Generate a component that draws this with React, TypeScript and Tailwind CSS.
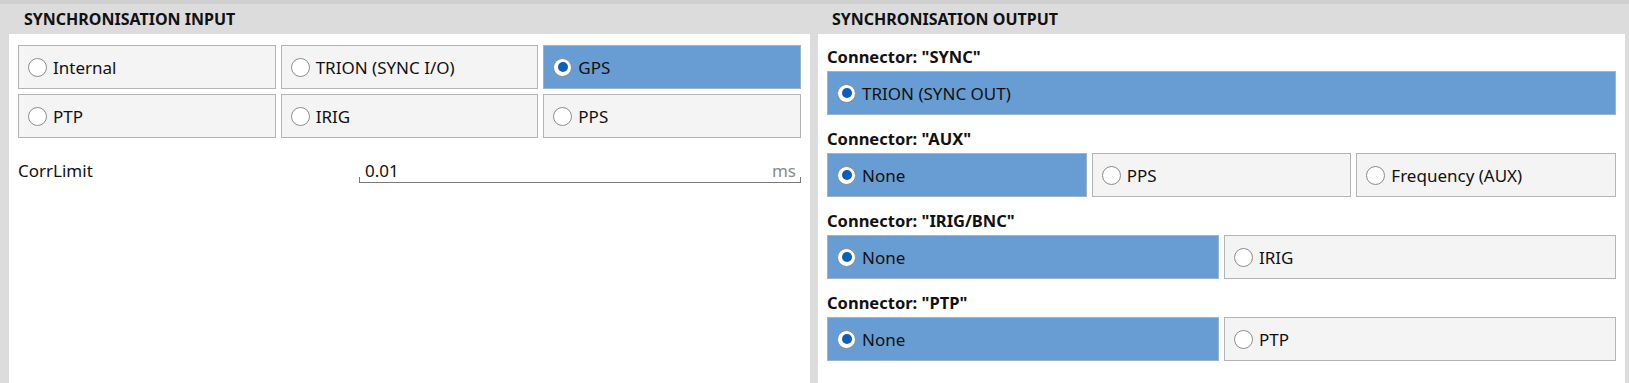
import React from "react";

const font = { fontFamily: '"Noto Sans", "Open Sans", sans-serif' };

function Radio({ checked }: { checked: boolean }) {
  return (
    <span className="relative flex h-[19px] w-[19px] shrink-0 items-center justify-center rounded-full border border-[#8c8c8c] bg-white">
      {checked && <span className="h-[10px] w-[10px] rounded-full bg-[#0b5fb9]" />}
    </span>
  );
}

function Option({ label, checked }: { label: string; checked?: boolean }) {
  return (
    <div
      className={
        "flex h-[44px] items-center gap-[6px] border pl-[9px] text-[17px] text-[#111] " +
        (checked ? "border-[#9fb4cc] bg-[#689dd3]" : "border-[#b4b4b4] bg-[#f4f4f4]")
      }
    >
      <Radio checked={!!checked} />
      <span className="leading-none">{label}</span>
    </div>
  );
}

function Connector({ title, children, cols }: { title: string; children: React.ReactNode; cols: string }) {
  return (
    <div className="flex flex-col">
      <div className="h-[20px] text-[16.5px] font-bold leading-[20px] text-[#111]">{title}</div>
      <div className={"mt-[4px] grid gap-[5px] " + cols}>{children}</div>
    </div>
  );
}

export default function App() {
  return (
    <div className="h-[383px] w-[1629px] overflow-hidden border-t-4 border-[#d0d0d0] bg-[#dcdcdc]" style={font}>
      <div className="flex h-full">
        {/* Left panel */}
        <div className="ml-[9px] flex w-[801px] flex-col">
          <div className="flex h-[30px] items-center pl-[15px] text-[16px] font-bold text-[#111]">
            SYNCHRONISATION INPUT
          </div>
          <div className="flex-1 bg-white px-[9px] pt-[11px]">
            <div className="grid grid-cols-3 gap-[5px]">
              <Option label="Internal" />
              <Option label="TRION (SYNC I/O)" />
              <Option label="GPS" checked />
              <Option label="PTP" />
              <Option label="IRIG" />
              <Option label="PPS" />
            </div>
            <div className="mt-[21px] flex items-end">
              <div className="w-[341px] pb-[1px] text-[17px] leading-[22px] text-[#111]">CorrLimit</div>
              <div className="relative flex h-[24px] flex-1 items-end border-b border-[#7a7a7a]">
                <span className="absolute bottom-[3px] left-[6px] text-[17px] leading-none text-[#111]">0.01</span>
                <span className="absolute bottom-[3px] right-[5px] text-[17px] leading-none text-[#8a8a8a]">ms</span>
                <span className="absolute bottom-0 left-0 h-[5px] border-l border-[#7a7a7a]" />
                <span className="absolute bottom-0 right-0 h-[5px] border-r border-[#7a7a7a]" />
              </div>
            </div>
          </div>
        </div>
        {/* Right panel */}
        <div className="ml-[8px] flex w-[807px] flex-col">
          <div className="flex h-[30px] items-center pl-[14px] text-[16px] font-bold text-[#111]">
            SYNCHRONISATION OUTPUT
          </div>
          <div className="flex flex-1 flex-col gap-[14px] bg-white px-[9px] pt-[13px]">
            <Connector title={'Connector: "SYNC"'} cols="grid-cols-1">
              <Option label="TRION (SYNC OUT)" checked />
            </Connector>
            <Connector title={'Connector: "AUX"'} cols="grid-cols-3">
              <Option label="None" checked />
              <Option label="PPS" />
              <Option label="Frequency (AUX)" />
            </Connector>
            <Connector title={'Connector: "IRIG/BNC"'} cols="grid-cols-2">
              <Option label="None" checked />
              <Option label="IRIG" />
            </Connector>
            <Connector title={'Connector: "PTP"'} cols="grid-cols-2">
              <Option label="None" checked />
              <Option label="PTP" />
            </Connector>
          </div>
        </div>
      </div>
    </div>
  );
}
